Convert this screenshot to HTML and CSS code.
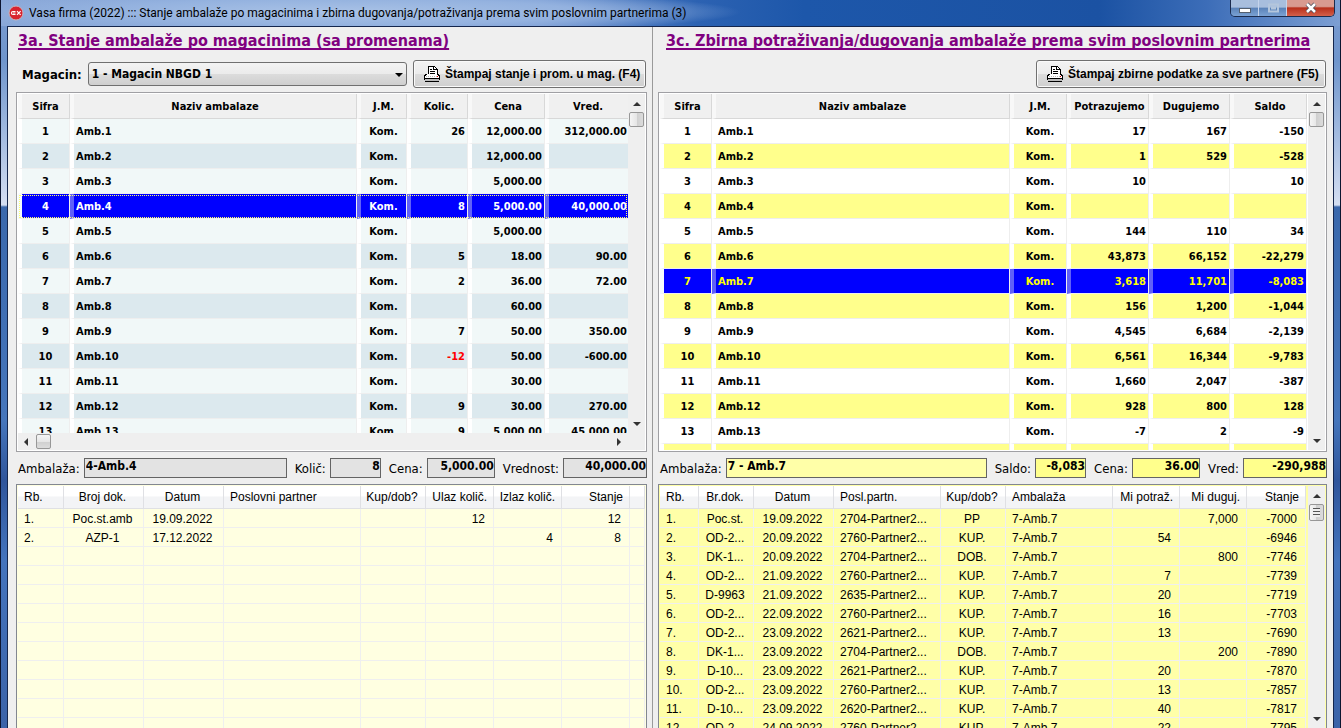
FILE: index.html
```html
<!DOCTYPE html>
<html lang="sr-Latn">
<head>
<meta charset="utf-8">
<title>Vasa firma (2022)</title>
<link rel="stylesheet" href="styles.css">
</head>
<body>
<svg class="defs" aria-hidden="true">
  <symbol id="printer" viewBox="0 0 16 16">
    <path d="M4 8V0h6l3 3v5" fill="#fff" stroke="#000"/>
    <path d="M9.500 0v3.500H13M5.500 3h2M5.500 5h5M5.500 7h5" fill="none" stroke="#000"/>
    <path d="M2 8h12l2 2v2H0v-2z" fill="#fff"/>
    <path d="M0 9.500h2M1 8.500h2M13 8.500h2M14 9.500h2M0.500 9v5M15.500 9v5M0 12.500h16M1 15.500h14" fill="none" stroke="#000"/>
    <path d="M1 13h14v2H1z" fill="#bbb"/>
    <path d="M2 10.500h12" stroke="#bbb" stroke-dasharray="1 1"/>
    <path d="M13 10.500h1" stroke="#e00"/>
  </symbol>
</svg>
<div class="window">
  <header class="titlebar">
    <svg class="logo" viewBox="0 0 16 16" aria-hidden="true"><circle cx="8" cy="8" r="7" fill="#d8232f" stroke="#c9b5bd"/><path d="M7.500 6.500H5Q3.500 6.500 3.500 8T5 9.500h2.500M5 8h2.500M9 6.200l3.600 3.600M12.600 6.200L9 9.800" stroke="#fff" stroke-width="1.200" fill="none"/></svg>
    <span class="caption">Vasa firma (2022) ::: Stanje ambalaže po magacinima i zbirna dugovanja/potraživanja prema svim poslovnim partnerima (3)</span>
    <div class="controls">
      <button class="ctl" aria-label="Minimize"><svg viewBox="0 0 14 12"><rect x="1.500" y="6.500" width="11" height="4" fill="#fff" stroke="#55606e"/></svg></button>
      <button class="ctl" aria-label="Maximize" disabled><svg viewBox="0 0 14 12"><path d="M3 2.500h9v7H3zM6 5.500h3v1H6z" fill="none" stroke="#b4c6dc" stroke-width="2"/></svg></button>
      <button class="ctl close" aria-label="Close"><svg viewBox="0 0 14 12"><path d="M3 2l8 8M11 2l-8 8" stroke="#4c4c58" stroke-width="4"/><path d="M3 2l8 8M11 2l-8 8" stroke="#fff" stroke-width="2.500"/></svg></button>
    </div>
  </header>
  <main class="client">
    <section class="pane left">
      <h1>3a. Stanje ambalaže po magacinima (sa promenama)</h1>
      <div class="toolbar">
        <label for="mag">Magacin:</label>
        <div class="combo"><select id="mag"><option>1 - Magacin NBGD 1</option></select></div>
        <button class="print"><svg aria-hidden="true"><use href="#printer"/></svg>Štampaj stanje i prom. u mag. (F4)</button>
      </div>
      <div class="grid stock">
        <div class="view">
          <table>
            <colgroup><col class="w52"><col><col class="w50"><col class="w61"><col class="w77"><col class="w83"></colgroup>
            <thead><tr><th>Sifra<th>Naziv ambalaze<th>J.M.<th>Kolic.<th>Cena<th>Vred.</thead>
            <tbody>
            <tr><td>1<td>Amb.1<td>Kom.<td>26<td>12,000.00<td>312,000.00
            <tr><td>2<td>Amb.2<td>Kom.<td><td>12,000.00<td>
            <tr><td>3<td>Amb.3<td>Kom.<td><td>5,000.00<td>
            <tr class="sel"><td>4<td>Amb.4<td>Kom.<td>8<td>5,000.00<td>40,000.00
            <tr><td>5<td>Amb.5<td>Kom.<td><td>5,000.00<td>
            <tr><td>6<td>Amb.6<td>Kom.<td>5<td>18.00<td>90.00
            <tr><td>7<td>Amb.7<td>Kom.<td>2<td>36.00<td>72.00
            <tr><td>8<td>Amb.8<td>Kom.<td><td>60.00<td>
            <tr><td>9<td>Amb.9<td>Kom.<td>7<td>50.00<td>350.00
            <tr><td>10<td>Amb.10<td>Kom.<td class="neg">-12<td>50.00<td>-600.00
            <tr><td>11<td>Amb.11<td>Kom.<td><td>30.00<td>
            <tr><td>12<td>Amb.12<td>Kom.<td>9<td>30.00<td>270.00
            <tr><td>13<td>Amb.13<td>Kom.<td>9<td>5,000.00<td>45,000.00
            </tbody>
          </table>
        </div>
        <div class="vbar"><i class="up"></i><i class="thumb"></i><i class="down"></i></div>
        <div class="hbar"><i class="prev"></i><i class="thumb"></i><i class="next"></i></div>
      </div>
      <div class="fields gray">
        <label for="a1">Ambalaža:</label><input class="grow" id="a1" value="4-Amb.4" readonly>
        <label for="a2">Količ:</label><input class="num f51" id="a2" value="8" readonly>
        <label for="a3">Cena:</label><input class="num f68" id="a3" value="5,000.00" readonly>
        <label for="a4">Vrednost:</label><input class="num f84" id="a4" value="40,000.00" readonly>
      </div>
      <div class="list pale">
        <div class="view">
          <table>
            <colgroup><col class="w46"><col class="w80"><col class="w80"><col><col class="w65"><col class="w68"><col class="w68"><col class="w68"><col class="w15"></colgroup>
            <thead><tr><th>Rb.<th class="c">Broj dok.<th class="c">Datum<th>Poslovni partner<th class="c">Kup/dob?<th class="r">Ulaz količ.<th class="r">Izlaz količ.<th class="r">Stanje<th></thead>
            <tbody>
            <tr><td>1.<td class="c">Poc.st.amb<td class="c">19.09.2022<td><td><td class="r">12<td><td class="r">12<td>
            <tr><td>2.<td class="c">AZP-1<td class="c">17.12.2022<td><td><td><td class="r">4<td class="r">8<td>
            <tr><td><td><td><td><td><td><td><td><td>
            <tr><td><td><td><td><td><td><td><td><td>
            <tr><td><td><td><td><td><td><td><td><td>
            <tr><td><td><td><td><td><td><td><td><td>
            <tr><td><td><td><td><td><td><td><td><td>
            <tr><td><td><td><td><td><td><td><td><td>
            <tr><td><td><td><td><td><td><td><td><td>
            <tr><td><td><td><td><td><td><td><td><td>
            <tr><td><td><td><td><td><td><td><td><td>
            <tr><td><td><td><td><td><td><td><td><td>
            </tbody>
          </table>
        </div>
      </div>
    </section>
    <section class="pane right">
      <h1>3c. Zbirna potraživanja/dugovanja ambalaže prema svim poslovnim partnerima</h1>
      <div class="toolbar">
        <button class="print wide"><svg aria-hidden="true"><use href="#printer"/></svg>Štampaj zbirne podatke za sve partnere (F5)</button>
      </div>
      <div class="grid debts">
        <div class="view">
          <table>
            <colgroup><col class="w52"><col><col class="w57"><col class="w82"><col class="w81"><col class="w77"></colgroup>
            <thead><tr><th>Sifra<th>Naziv ambalaze<th>J.M.<th>Potrazujemo<th>Dugujemo<th>Saldo</thead>
            <tbody>
            <tr><td>1<td>Amb.1<td>Kom.<td>17<td>167<td>-150
            <tr><td>2<td>Amb.2<td>Kom.<td>1<td>529<td>-528
            <tr><td>3<td>Amb.3<td>Kom.<td>10<td><td>10
            <tr><td>4<td>Amb.4<td>Kom.<td><td><td>
            <tr><td>5<td>Amb.5<td>Kom.<td>144<td>110<td>34
            <tr><td>6<td>Amb.6<td>Kom.<td>43,873<td>66,152<td>-22,279
            <tr class="sel"><td>7<td>Amb.7<td>Kom.<td>3,618<td>11,701<td>-8,083
            <tr><td>8<td>Amb.8<td>Kom.<td>156<td>1,200<td>-1,044
            <tr><td>9<td>Amb.9<td>Kom.<td>4,545<td>6,684<td>-2,139
            <tr><td>10<td>Amb.10<td>Kom.<td>6,561<td>16,344<td>-9,783
            <tr><td>11<td>Amb.11<td>Kom.<td>1,660<td>2,047<td>-387
            <tr><td>12<td>Amb.12<td>Kom.<td>928<td>800<td>128
            <tr><td>13<td>Amb.13<td>Kom.<td>-7<td>2<td>-9
            <tr><td><td><td><td><td><td>
            </tbody>
          </table>
        </div>
        <div class="vbar"><i class="up"></i><i class="thumb"></i><i class="down"></i></div>
      </div>
      <div class="fields yellow">
        <label for="b1">Ambalaža:</label><input class="grow" id="b1" value="7 - Amb.7" readonly>
        <label for="b2">Saldo:</label><input class="num f51" id="b2" value="-8,083" readonly>
        <label for="b3">Cena:</label><input class="num f68" id="b3" value="36.00" readonly>
        <label for="b4">Vred:</label><input class="num f84" id="b4" value="-290,988" readonly>
      </div>
      <div class="list strong">
        <div class="view">
          <table>
            <colgroup><col class="w39"><col class="w55"><col class="w80"><col class="w107"><col class="w65"><col><col class="w67"><col class="w67"><col class="w59"></colgroup>
            <thead><tr><th>Rb.<th class="c">Br.dok.<th class="c">Datum<th>Posl.partn.<th class="c">Kup/dob?<th>Ambalaža<th class="r">Mi potraž.<th class="r">Mi duguj.<th class="r">Stanje</thead>
            <tbody>
            <tr><td>1.<td class="c">Poc.st.<td class="c">19.09.2022<td>2704-Partner2...<td class="c">PP<td>7-Amb.7<td><td class="r">7,000<td class="r">-7000
            <tr><td>2.<td class="c">OD-2...<td class="c">20.09.2022<td>2760-Partner2...<td class="c">KUP.<td>7-Amb.7<td class="r">54<td><td class="r">-6946
            <tr><td>3.<td class="c">DK-1...<td class="c">20.09.2022<td>2704-Partner2...<td class="c">DOB.<td>7-Amb.7<td><td class="r">800<td class="r">-7746
            <tr><td>4.<td class="c">OD-2...<td class="c">21.09.2022<td>2760-Partner2...<td class="c">KUP.<td>7-Amb.7<td class="r">7<td><td class="r">-7739
            <tr><td>5.<td class="c">D-9963<td class="c">21.09.2022<td>2635-Partner2...<td class="c">KUP.<td>7-Amb.7<td class="r">20<td><td class="r">-7719
            <tr><td>6.<td class="c">OD-2...<td class="c">22.09.2022<td>2760-Partner2...<td class="c">KUP.<td>7-Amb.7<td class="r">16<td><td class="r">-7703
            <tr><td>7.<td class="c">OD-2...<td class="c">23.09.2022<td>2621-Partner2...<td class="c">KUP.<td>7-Amb.7<td class="r">13<td><td class="r">-7690
            <tr><td>8.<td class="c">DK-1...<td class="c">23.09.2022<td>2704-Partner2...<td class="c">DOB.<td>7-Amb.7<td><td class="r">200<td class="r">-7890
            <tr><td>9.<td class="c">D-10...<td class="c">23.09.2022<td>2621-Partner2...<td class="c">KUP.<td>7-Amb.7<td class="r">20<td><td class="r">-7870
            <tr><td>10.<td class="c">OD-2...<td class="c">23.09.2022<td>2760-Partner2...<td class="c">KUP.<td>7-Amb.7<td class="r">13<td><td class="r">-7857
            <tr><td>11.<td class="c">D-10...<td class="c">23.09.2022<td>2620-Partner2...<td class="c">KUP.<td>7-Amb.7<td class="r">40<td><td class="r">-7817
            <tr><td>12.<td class="c">OD-2...<td class="c">24.09.2022<td>2760-Partner2...<td class="c">KUP.<td>7-Amb.7<td class="r">22<td><td class="r">-7795
            </tbody>
          </table>
        </div>
        <div class="vbar"><i class="up"></i><i class="thumb lines"></i><i class="down"></i></div>
      </div>
    </section>
  </main>
</div>
</body>
</html>
```
FILE: styles.css
```css
* { box-sizing: border-box; }
html, body { height: 100%; margin: 0; }
body {
  overflow: hidden;
  background: #efefef;
  color: #000;
  font: 12px/15px "DejaVu Sans Condensed", "Noto Sans", sans-serif;
}
.defs { display: none; }
button, input, select { font: inherit; color: inherit; margin: 0; }

.window {
  display: flex;
  flex-direction: column;
  height: 100vh;
  padding: 0 6px;
  border: solid #0c1530;
  border-width: 0 1px;
  background: linear-gradient(#7c9cd0 0, #6f95cc 60px, #c9d6ee 190px, #d5dff2 205px, #3a68ac 207px, #4676bc 420px, #2f559b 480px, #4474bd 560px, #3b63a8 100%);
}
.titlebar {
  display: flex;
  align-items: center;
  height: 26px;
  margin: 0 -6px;
  padding-left: 7px;
  background:
    radial-gradient(ellipse 400px 22px at 340px 12px, #a9c2e6 0, #94b2df 60%, transparent 100%),
    linear-gradient(90deg, #8aa8d8 0, #7699d3 40%, #2c62b2 52%, #1d57aa 60%, #1b52a3 82%, #3c6db8 90%, #7d9fd3 100%);
}
.logo { width: 16px; height: 16px; margin-right: 5px; }
.caption { font-family: Roboto, "Noto Sans", sans-serif; white-space: nowrap; }
.controls {
  display: flex;
  align-self: flex-start;
  margin-left: auto;
  margin-right: 5px;
  border: 1px solid #1b2b4d;
  border-top: 0;
  border-radius: 0 0 5px 5px;
  overflow: hidden;
}
.ctl {
  display: flex;
  align-items: center;
  justify-content: center;
  width: 28px;
  height: 16px;
  padding: 0;
  border: 0;
  border-right: 1px solid #c4d4ec;
  background: linear-gradient(#a8bedd 45%, #5a82b8 50%, #7ba2d4);
}
.ctl svg { width: 14px; height: 12px; }
.ctl.close { width: 47px; border: 0; background: linear-gradient(#d89a90 40%, #b8301c 50%, #d4604a); }
.ctl.close svg { width: 16px; }

.client {
  flex: 1;
  min-height: 0;
  display: grid;
  grid-template-columns: 645fr 680fr;
  background: #efefef;
  border: 1px solid #14264d;
  border-bottom: 0;
}
.pane {
  display: flex;
  flex-direction: column;
  min-width: 0;
  min-height: 0;
  padding: 4px 5px 0 8px;
}
.pane.left { border-right: 1px solid #9a9a9a; }
.pane.right { padding-right: 6px; padding-left: 5px; }
h1 {
  margin: 0 0 9px 2px;
  color: #800080;
  font-size: 16px;
  line-height: 20px;
  text-decoration: underline;
  text-decoration-thickness: 2px;
  text-underline-offset: 2px;
  text-decoration-skip-ink: none;
  white-space: nowrap;
}
.right h1 { margin-left: 8px; }
.toolbar {
  display: flex;
  align-items: center;
  gap: 6px;
  height: 28px;
  margin-bottom: 4px;
  padding: 0 1px 0 6px;
  font-weight: bold;
}
.toolbar label { font-size: 13px; }
.right .toolbar { justify-content: flex-end; }
.combo { flex: 1; display: flex; position: relative; }
.combo::after {
  content: "";
  position: absolute;
  right: 4px;
  top: 11px;
  border: 4px solid transparent;
  border-top-color: #000;
  border-bottom: 0;
}
select {
  flex: 1;
  appearance: none;
  height: 24px;
  padding: 0 3px;
  border: 1px solid #707070;
  border-radius: 3px;
  background: linear-gradient(#f3f3f3 0, #ebebeb 50%, #dcdcdc 50%, #cfcfcf 100%);
  font-weight: bold;
}
.print {
  display: flex;
  align-items: center;
  gap: 5px;
  width: 233px;
  height: 28px;
  padding: 0 8px 0 10px;
  border: 1px solid #707070;
  border-radius: 3px;
  box-shadow: inset 0 0 0 1px #fafafa;
  background: linear-gradient(#f3f3f3 0, #ebebeb 50%, #dcdcdc 50%, #cfcfcf 100%);
  font: bold 12px/15px "Liberation Sans", Arial, sans-serif;
  white-space: nowrap;
}
.print.wide { width: 290px; }
.print svg { width: 16px; height: 16px; flex: none; shape-rendering: crispEdges; }

.grid {
  display: grid;
  grid-template-columns: 1fr 17px;
  height: 360px;
  padding: 1px;
  border: 1px solid #a0a0a4;
  background: #fff;
}
.stock { grid-template-rows: 1fr 17px; }
.view { overflow: hidden; min-width: 0; min-height: 0; }
.debts .view { margin-right: 1px; }
table { width: 100%; table-layout: fixed; border-collapse: separate; border-spacing: 0; }
th, td { overflow: hidden; white-space: nowrap; }
.grid th, .grid td {
  height: 25px;
  padding: 2px 2px 0;
  border-left: 4px solid #fff;
  border-right: 1px solid #eee;
  border-bottom: 1px solid #eee;
  font-size: 11px;
  line-height: 22px;
  font-weight: bold;
  text-align: right;
}
.grid th { background: #f0f0f0; border-color: #d8d8d8; border-left-color: #f8f8f8; text-align: center; padding: 2px 0 0; }
.grid td:nth-child(1), .grid td:nth-child(3) { text-align: center; }
.grid td:nth-child(2) { text-align: left; }
.stock td { background: #f1f8f8; }
.stock tr:nth-child(even) td { background: #dce9ee; }
.debts tr:nth-child(even) td { background: #ffff8c; }
.stock td:last-child, .stock th:last-child { border-right: 0; padding-right: 1px; }
.grid .sel td, .stock .sel:nth-child(even) td { background: #00f; color: #fff; border-left-color: #6060f8; }
.grid .sel td:first-child { border-left-color: #f4faff; }
.debts .sel td { color: #ff0; }
.stock .sel { outline: 1px dotted #ff6; outline-offset: -2px; }
.grid .neg { color: #f00; }

.vbar, .hbar { display: flex; align-items: center; background: #efefef; }
.vbar { flex-direction: column; padding: 8px 0 7px; }
.hbar { grid-column: 1 / -1; padding: 0 24px 0 6px; }
.up, .down { border: 4px solid transparent; }
.up { border-top: 0; border-bottom-color: #333; }
.down { border-bottom: 0; border-top-color: #333; margin-top: auto; }
.prev, .next { border: 4px solid transparent; }
.prev { border-left: 0; border-right-color: #333; }
.next { border-right: 0; border-left-color: #333; margin-left: auto; }
.thumb {
  width: 15px;
  height: 15px;
  border: 1px solid #979797;
  border-radius: 2px;
  background: linear-gradient(90deg, #f5f5f5, #e6e6e6 50%, #cfcfcf 50%, #dcdcdc);
}
.vbar .thumb { margin-top: 6px; }
.hbar .thumb { margin-left: 8px; background: linear-gradient(#f5f5f5, #e6e6e6 50%, #cfcfcf 50%, #dcdcdc); }
.thumb.lines { display: flex; align-items: center; justify-content: center; height: 17px; }
.thumb.lines::before {
  content: "";
  width: 7px;
  height: 9px;
  background: repeating-linear-gradient(#555 0 1px, #eee 1px 3px);
}

.fields { display: flex; align-items: center; height: 32px; }
.fields label { margin: 0 4px 0 8px; font-size: 13px; white-space: nowrap; }
.fields label:first-child { margin-left: 2px; }
.fields input {
  min-width: 0;
  height: 20px;
  padding: 0 1px 4px;
  border: 1px solid #646464;
  border-radius: 0;
  font-weight: bold;
  outline: 0;
}
.fields .grow { flex: 1; }
.fields .num { padding-right: 0; text-align: right; }
.gray input { background: #e3e3e3; }
.yellow .num { background: #ffff8c; }
.yellow .grow { background: #ffffa8; }
.f51 { width: 51px; }
.f68 { width: 68px; }
.f84 { width: 84px; }

.list {
  flex: 1;
  min-height: 0;
  display: flex;
  padding: 1px 1px 0;
  border: 1px solid #828790;
  border-bottom: 0;
}
.list .view { flex: 1; }
.list .vbar { width: 17px; margin-left: 2px; }
.list th, .list td {
  height: 19px;
  padding: 2px 6px 0;
  border-right: 1px solid #efefef;
  border-bottom: 1px solid #efefef;
  font: 12px/16px "Liberation Sans", Arial, sans-serif;
  text-align: left;
}
.list th {
  height: 23px;
  padding-top: 0;
  border-color: #dfe0e4;
  background: linear-gradient(#fff 45%, #f3f4f6 50%, #f3f4f6);
}
.list .c { padding-left: 0; padding-right: 2px; text-align: center; }
.list .r { padding-left: 0; padding-right: 8px; text-align: right; }
.list th.r { padding-right: 6px; }
.pale { background: #ffffe1; }
.strong { background: #ffffa8; }

.w15 { width: 15px; }
.w39 { width: 39px; }
.w46 { width: 46px; }
.w50 { width: 50px; }
.w52 { width: 52px; }
.w55 { width: 55px; }
.w57 { width: 57px; }
.w59 { width: 59px; }
.w61 { width: 61px; }
.w65 { width: 65px; }
.w67 { width: 67px; }
.w68 { width: 68px; }
.w77 { width: 77px; }
.w80 { width: 80px; }
.w81 { width: 81px; }
.w82 { width: 82px; }
.w83 { width: 83px; }
.w107 { width: 107px; }
```
